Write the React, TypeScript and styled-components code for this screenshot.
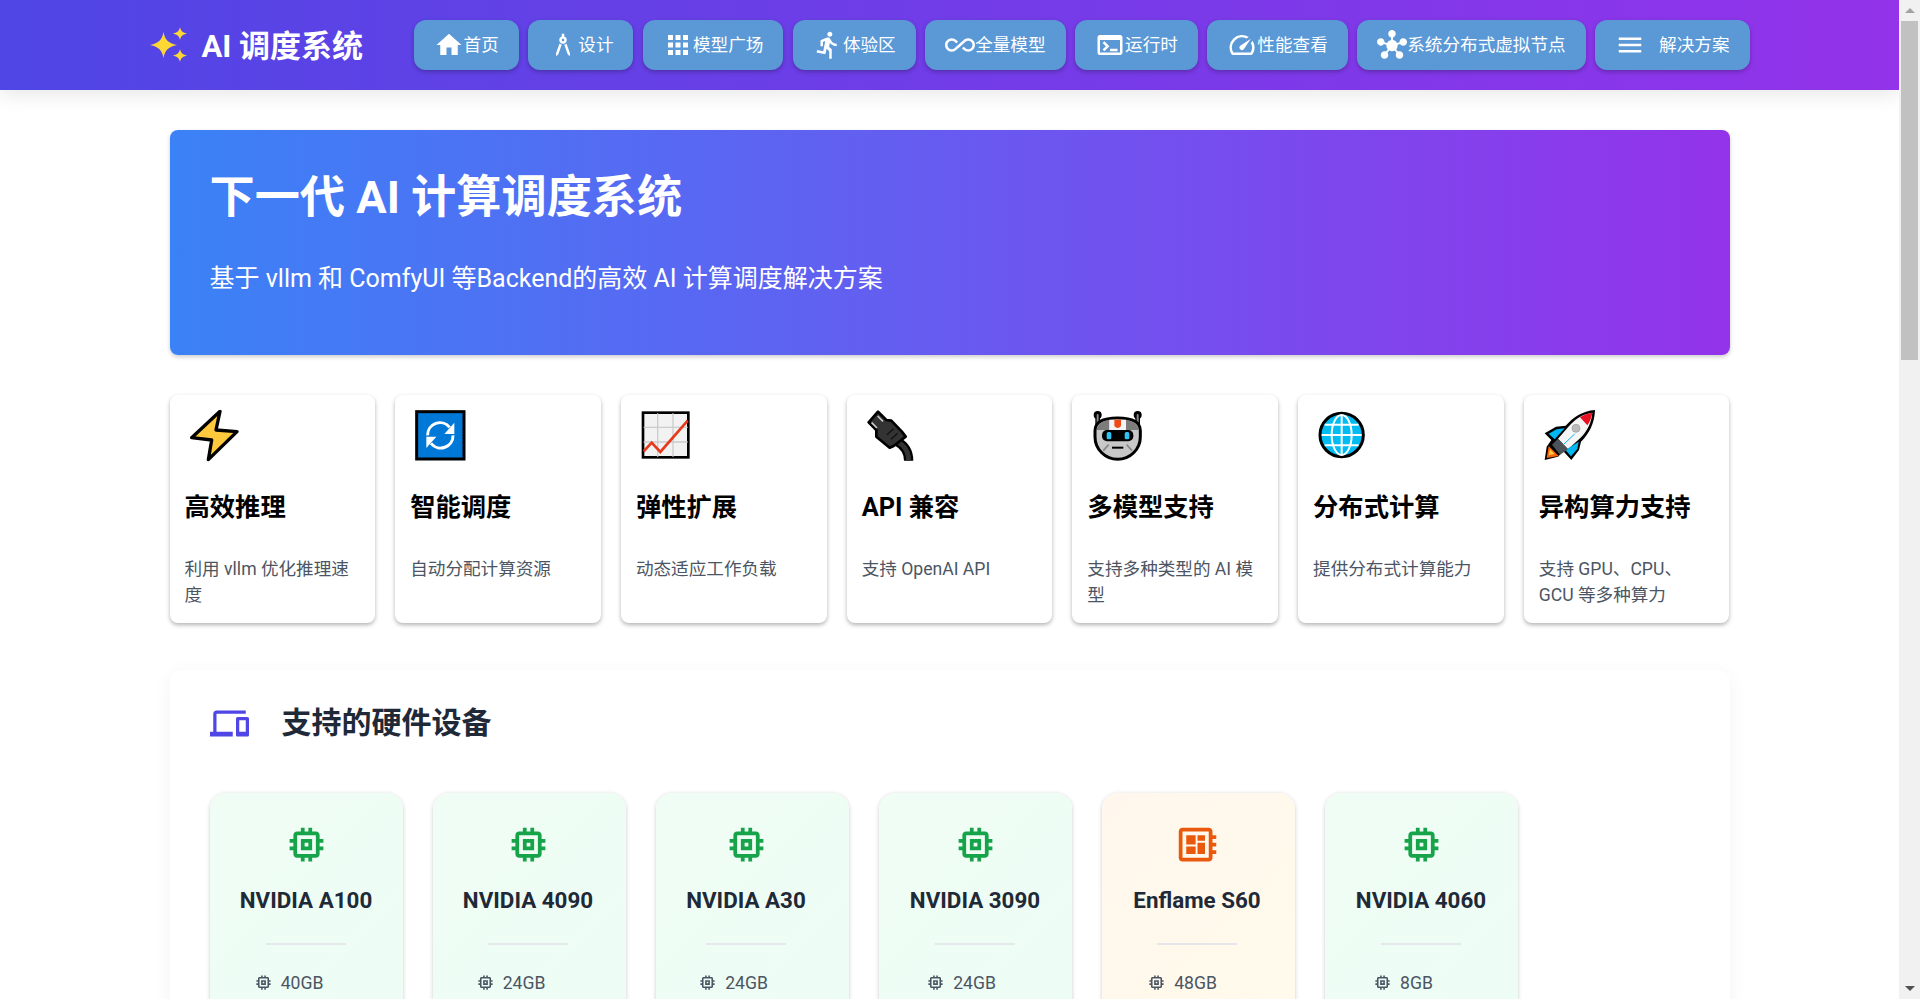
import * as React from 'react'
import styled, { createGlobalStyle } from 'styled-components'
import {
  MdAllInclusive,
  MdApps,
  MdArchitecture,
  MdDeveloperBoard,
  MdDevices,
  MdDirectionsRun,
  MdHome,
  MdHub,
  MdMemory,
  MdMenu,
  MdSpeed,
  MdTerminal,
} from 'react-icons/md'

const FONT = `Roboto, 'Noto Sans CJK SC', sans-serif`

const GlobalStyle = createGlobalStyle`
  html, body {
    margin: 0;
    height: 100%;
    overflow: hidden;
    background: #fff;
  }
  body {
    font-family: ${FONT};
  }
  * {
    box-sizing: border-box;
  }
`

const Shell = styled.div`
  display: flex;
  height: 100vh;
  overflow: hidden;
`

const Page = styled.div`
  flex: 1;
  min-width: 0;
  overflow: hidden;
`

const ScrollTrack = styled.div`
  flex: none;
  width: 21px;
  padding: 0 2px;
  background: #f1f1f1;
  display: flex;
  flex-direction: column;
  align-items: center;
`

const ScrollArrow = styled.div<{ $down?: boolean }>`
  flex: none;
  height: 21px;
  width: 100%;
  display: flex;
  align-items: center;
  justify-content: center;
  &::before {
    content: '';
    border-left: 5px solid transparent;
    border-right: 5px solid transparent;
    ${(p) => (p.$down ? 'border-top: 5px solid #505050;' : 'border-bottom: 5px solid #a3a3a3;')}
  }
`

const ScrollThumb = styled.div`
  flex: none;
  height: 339px;
  width: 100%;
  background: #c1c1c1;
`

const ScrollSpacer = styled.div`
  flex: 1;
`

const Header = styled.header`
  height: 90px;
  background: linear-gradient(90deg, #4f46e5, #9333ea);
  box-shadow: 0 4px 20px rgba(0, 0, 0, 0.1);
  position: relative;
`

const HeaderInner = styled.div`
  max-width: 1600px;
  height: 100%;
  margin: 0 auto;
  display: flex;
  align-items: center;
  justify-content: space-between;
`

const Logo = styled.div`
  display: flex;
  align-items: center;
  gap: 15px;
  color: #fff;
  font-size: 31px;
  font-weight: 700;
  white-space: nowrap;
`

const LogoText = styled.span`
  margin-bottom: 4px;
`

const Nav = styled.nav`
  display: flex;
  gap: 9.5px;
`

const NavButton = styled.a`
  height: 50px;
  padding: 0 20px;
  display: flex;
  align-items: center;
  border-radius: 12px;
  background: #5a98d6;
  box-shadow: 0 2px 4px rgba(0, 0, 0, 0.25);
  color: #fff;
  font-size: 17.6px;
  white-space: nowrap;
  svg {
    width: 30px;
    height: 30px;
    flex: none;
  }
`

const NavLabel = styled.span<{ $spaced?: boolean }>`
  margin-bottom: 4px;
  margin-left: ${(p) => (p.$spaced ? '14px' : '0')};
`

const Main = styled.main`
  max-width: 1600px;
  margin: 0 auto;
  padding: 40px 20px 0;
`

const Hero = styled.section`
  height: 225px;
  padding: 40px;
  border-radius: 8px;
  background: linear-gradient(90deg, #3b82f6, #9333ea);
  box-shadow: 0 2px 4px rgba(0, 0, 0, 0.2);
  color: #fff;
`

const HeroTitle = styled.h1`
  margin: 0 0 35px;
  font-size: 45.2px;
  line-height: 56px;
  font-weight: 700;
`

const HeroText = styled.p`
  margin: 0;
  font-size: 25px;
  line-height: 36px;
`

const FeatureGrid = styled.div`
  margin-top: 40px;
  display: grid;
  grid-template-columns: repeat(7, 1fr);
  gap: 20px;
`

const FeatureCard = styled.article`
  height: 228px;
  padding: 15px;
  border-radius: 8px;
  background: #fff;
  box-shadow: 0 2px 4px rgba(0, 0, 0, 0.3);
`

const FeatureIcon = styled.div`
  height: 50px;
  padding-left: 5px;
  svg {
    display: block;
    width: 52px;
    height: 52px;
  }
`

const FeatureTitle = styled.h3`
  margin: 32px 0 0;
  font-size: 25.3px;
  line-height: 32px;
  font-weight: 700;
  color: #000;
`

const FeatureText = styled.p`
  margin: 32px 0 0;
  font-size: 17.6px;
  line-height: 26px;
  color: #4b5563;
`

const Section = styled.section`
  margin-top: 47px;
  padding: 30px 40px 0;
  border-radius: 12px;
  background: #fff;
  box-shadow: 0 4px 20px rgba(0, 0, 0, 0.05);
`

const SectionHead = styled.div`
  display: flex;
  align-items: center;
  gap: 33px;
  color: #1f2937;
  svg {
    width: 39px;
    height: 39px;
    color: #4f46e5;
  }
`

const SectionTitle = styled.h2`
  margin: 0;
  font-size: 30px;
  line-height: 46px;
  font-weight: 700;
`

const DeviceRow = styled.div`
  margin-top: 47px;
  display: flex;
  gap: 30px;
`

const DeviceCard = styled.div<{ $tone: 'green' | 'orange'; $inset: number }>`
  flex: none;
  width: 193px;
  height: 300px;
  padding: 28.5px ${(p) => p.$inset}px 0 0;
  border-radius: 16px;
  background: ${(p) =>
    p.$tone === 'green'
      ? 'linear-gradient(135deg, #f0fdf4, #ecfdf5)'
      : 'linear-gradient(135deg, #fff7ed, #fffbeb)'};
  box-shadow: 0 1px 4px rgba(0, 0, 0, 0.2);
  display: flex;
  flex-direction: column;
  align-items: center;
`

const DeviceIcon = styled.div<{ $tone: 'green' | 'orange' }>`
  height: 45px;
  color: ${(p) => (p.$tone === 'green' ? '#16a34a' : '#ea580c')};
  svg {
    display: block;
    width: 45px;
    height: 45px;
  }
`

const DeviceName = styled.h4`
  margin: 17px 0 0;
  font-size: 22.4px;
  line-height: 32px;
  font-weight: 700;
  color: #1f2937;
  white-space: nowrap;
`

const Divider = styled.div`
  margin-top: 27.5px;
  width: 80px;
  height: 2px;
  background: #e5e7eb;
`

const DeviceStat = styled.div<{ $pad: number }>`
  margin-top: 24.5px;
  padding-right: ${(p) => p.$pad}px;
  display: flex;
  align-items: center;
  gap: 8px;
  font-size: 17.6px;
  line-height: 26px;
  color: #4b5563;
  svg {
    width: 19px;
    height: 19px;
  }
`

/* hand drawn emoji, one unit is a third of a pixel */
const Bolt = () => (
  <svg viewBox="0 0 156 156">
    <path
      d="M90 4 L5 83 L65 90 L55 149 L141 65 L78 60 Z"
      fill="#ffc83d"
      stroke="#000"
      strokeWidth="10"
      strokeLinejoin="round"
    />
  </svg>
)

const Refresh = () => (
  <svg viewBox="0 0 156 156">
    <rect x="5" y="5" width="142" height="142" fill="#0078d7" stroke="#000" strokeWidth="9" />
    <g fill="none" stroke="#fff" strokeWidth="9">
      <path d="M38 76 A37 37 0 0 1 104 52" />
      <path d="M114 76 A37 37 0 0 1 48 100" />
    </g>
    <path d="M118 38 V72 H88 Z M34 114 V80 H64 Z" fill="#fff" />
  </svg>
)

const Chart = () => (
  <svg viewBox="0 0 156 156">
    <rect x="6" y="8" width="136" height="134" fill="#f2f2f2" stroke="#000" strokeWidth="8" />
    <path d="M50 10 V140 M96 10 V140 M8 52 H140 M8 96 H140" stroke="#ccc" strokeWidth="4" />
    <path d="M8 124 L32 98 L58 126 L140 32" fill="none" stroke="#e8391a" strokeWidth="8" />
  </svg>
)

const Plug = () => (
  <svg viewBox="0 0 156 156">
    <path d="M90 94 C112 106 125 125 125 152" fill="none" stroke="#000" strokeWidth="28" />
    <path d="M90 94 C112 106 125 125 125 152" fill="none" stroke="#333" strokeWidth="14" />
    <path
      d="M33 5 L5 37 L28 60 L28 80 L68 113 L80 108 L116 80 L104 64 L73 32 L58 30 Z"
      fill="#333"
      stroke="#000"
      strokeWidth="8"
      strokeLinejoin="round"
    />
    <path d="M14 38 L30 54 M32 18 L48 34" stroke="#ccc" strokeWidth="5" />
    <path d="M60 74 L80 56 M72 88 L92 70" stroke="#111" strokeWidth="4" />
  </svg>
)

const Robot = () => (
  <svg viewBox="0 0 156 156">
    <path d="M17 15 V60 M137 15 V60" stroke="#000" strokeWidth="14" strokeLinecap="round" />
    <circle cx="17" cy="15" r="12" fill="#000" />
    <circle cx="137" cy="15" r="12" fill="#000" />
    <path d="M17 15 V50 M137 15 V50" stroke="#8a8a8a" strokeWidth="6" strokeLinecap="round" />
    <path
      d="M9 62 C9 34 36 24 77 24 C118 24 145 34 145 62 V80 C145 118 114 148 77 148 C40 148 9 118 9 80 Z"
      fill="#c8c8c8"
      stroke="#000"
      strokeWidth="9"
    />
    <path d="M14 62 C16 42 32 32 52 30 V60 H14 Z M140 62 C138 42 122 32 102 30 V60 H140 Z" fill="#7c7c7c" />
    <path d="M52 29 H102 V62 H52 Z" fill="#f5f5f5" />
    <path d="M67 29 H87 V48 Q77 60 67 48 Z" fill="#f04a16" />
    <rect x="30" y="60" width="94" height="34" rx="15" fill="#000" />
    <rect x="44" y="66" width="14" height="22" rx="5" fill="#2fc2f2" />
    <rect x="98" y="66" width="14" height="22" rx="5" fill="#2fc2f2" />
    <path d="M60 113 H94" stroke="#000" strokeWidth="6" />
    <path d="M34 122 L50 104 M120 122 L104 104" stroke="#888" strokeWidth="5" />
  </svg>
)

const Globe = () => (
  <svg viewBox="0 0 156 156">
    <circle cx="71" cy="75" r="65" fill="#00bcf2" stroke="#000" strokeWidth="9" />
    <g fill="none" stroke="#fff" strokeWidth="6">
      <ellipse cx="71" cy="75" rx="30" ry="60" />
      <path d="M71 15 V135 M11 75 H131 M20 44 H122 M20 106 H122" />
    </g>
  </svg>
)

const Rocket = () => (
  <svg viewBox="0 0 156 156">
    <path
      d="M153 0 C115 3 88 22 65 47 L36 50 L2 70 L22 90 L8 110 L2 150 L42 140 L58 124 L82 150 L105 120 L111 95 C135 72 152 40 153 0 Z"
      fill="#000"
    />
    <path d="M145 8 C115 12 92 28 72 52 L42 86 L72 118 L105 88 C130 64 142 40 145 8 Z" fill="#f5f5f5" />
    <path d="M145 8 C130 10 118 15 108 22 L130 46 C138 34 143 22 145 8 Z" fill="#e81123" />
    <path d="M62 55 L38 58 L14 71 L32 88 Z M104 95 L100 117 L81 139 L64 120 Z" fill="#00b7f1" />
    <path d="M42 86 L72 118 L48 134 L24 104 Z" fill="#4b5258" />
    <path d="M8 144 L14 108 L44 138 Z" fill="#f7630c" />
    <path d="M14 136 L18 118 L32 132 Z" fill="#ffc83d" />
    <circle cx="96" cy="55" r="12" fill="#bbb" stroke="#999" strokeWidth="2" />
    <path d="M58 104 L92 72" stroke="#00b7f1" strokeWidth="3" />
  </svg>
)

const Sparkles = () => (
  <svg width="37" height="36" viewBox="0 0 37 36">
    <path
      d="M13.5 5 C15 13 18 16 27 18 C18 20 15 23 13.5 31 C12 23 9 20 0 18 C9 16 12 13 13.5 5 Z"
      fill="#fdd835"
    />
    <path
      d="M30 0 C30.8 4 32.5 5.5 37 6.5 C32.5 7.5 30.8 9 30 13 C29.2 9 27.5 7.5 23 6.5 C27.5 5.5 29.2 4 30 0 Z"
      fill="#fdd835"
    />
    <path
      d="M30 22 C30.8 26 32.5 27.5 37 28.5 C32.5 29.5 30.8 31 30 35 C29.2 31 27.5 29.5 23 28.5 C27.5 27.5 29.2 26 30 22 Z"
      fill="#fdd835"
    />
  </svg>
)

const navItems = [
  { icon: <MdHome />, label: '首页' },
  { icon: <MdArchitecture />, label: '设计' },
  { icon: <MdApps />, label: '模型广场' },
  { icon: <MdDirectionsRun />, label: '体验区' },
  { icon: <MdAllInclusive />, label: '全量模型' },
  { icon: <MdTerminal />, label: '运行时' },
  { icon: <MdSpeed />, label: '性能查看' },
  { icon: <MdHub />, label: '系统分布式虚拟节点' },
  { icon: <MdMenu />, label: '解决方案', spaced: true },
]

const features = [
  { icon: <Bolt />, title: '高效推理', text: '利用 vllm 优化推理速度' },
  { icon: <Refresh />, title: '智能调度', text: '自动分配计算资源' },
  { icon: <Chart />, title: '弹性扩展', text: '动态适应工作负载' },
  { icon: <Plug />, title: 'API 兼容', text: '支持 OpenAI API' },
  { icon: <Robot />, title: '多模型支持', text: '支持多种类型的 AI 模型' },
  { icon: <Globe />, title: '分布式计算', text: '提供分布式计算能力' },
  { icon: <Rocket />, title: '异构算力支持', text: '支持 GPU、CPU、GCU 等多种算力' },
]

const devices: {
  name: string
  memory: string
  tone: 'green' | 'orange'
  inset: number
  statPad: number
}[] = [
  { name: 'NVIDIA A100', memory: '40GB', tone: 'green', inset: 0, statPad: 35 },
  { name: 'NVIDIA 4090', memory: '24GB', tone: 'green', inset: 2, statPad: 35 },
  { name: 'NVIDIA A30', memory: '24GB', tone: 'green', inset: 12, statPad: 26 },
  { name: 'NVIDIA 3090', memory: '24GB', tone: 'green', inset: 0, statPad: 28 },
  { name: 'Enflame S60', memory: '48GB', tone: 'orange', inset: 2, statPad: 30 },
  { name: 'NVIDIA 4060', memory: '8GB', tone: 'green', inset: 0, statPad: 36 },
]

export default function App() {
  return (
    <Shell>
      <GlobalStyle />
      <Page>
        <Header>
          <HeaderInner>
            <Logo>
              <Sparkles />
              <LogoText>AI 调度系统</LogoText>
            </Logo>
            <Nav>
              {navItems.map((item) => (
                <NavButton key={item.label}>
                  {item.icon}
                  <NavLabel $spaced={item.spaced}>{item.label}</NavLabel>
                </NavButton>
              ))}
            </Nav>
          </HeaderInner>
        </Header>
        <Main>
          <Hero>
            <HeroTitle>下一代 AI 计算调度系统</HeroTitle>
            <HeroText>基于 vllm 和 ComfyUI 等Backend的高效 AI 计算调度解决方案</HeroText>
          </Hero>
          <FeatureGrid>
            {features.map((f) => (
              <FeatureCard key={f.title}>
                <FeatureIcon>{f.icon}</FeatureIcon>
                <FeatureTitle>{f.title}</FeatureTitle>
                <FeatureText>{f.text}</FeatureText>
              </FeatureCard>
            ))}
          </FeatureGrid>
          <Section>
            <SectionHead>
              <MdDevices />
              <SectionTitle>支持的硬件设备</SectionTitle>
            </SectionHead>
            <DeviceRow>
              {devices.map((d) => (
                <DeviceCard key={d.name} $tone={d.tone} $inset={d.inset}>
                  <DeviceIcon $tone={d.tone}>
                    {d.tone === 'green' ? <MdMemory /> : <MdDeveloperBoard />}
                  </DeviceIcon>
                  <DeviceName>{d.name}</DeviceName>
                  <Divider />
                  <DeviceStat $pad={d.statPad}>
                    <MdMemory />
                    {d.memory}
                  </DeviceStat>
                </DeviceCard>
              ))}
            </DeviceRow>
          </Section>
        </Main>
      </Page>
      <ScrollTrack>
        <ScrollArrow />
        <ScrollThumb />
        <ScrollSpacer />
        <ScrollArrow $down />
      </ScrollTrack>
    </Shell>
  )
}
